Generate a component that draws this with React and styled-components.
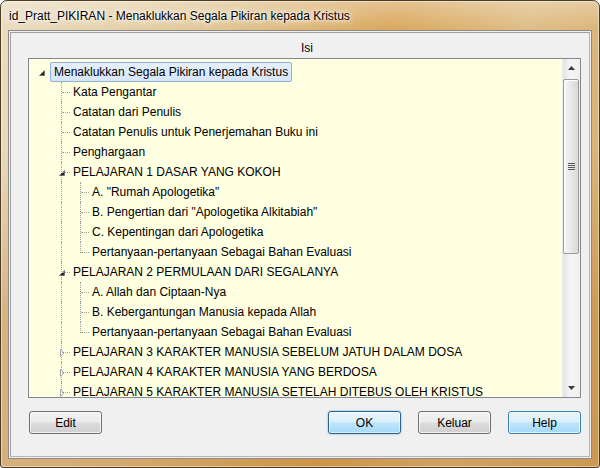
import React from 'react';
import styled, { createGlobalStyle, css } from 'styled-components';

const GlobalStyle = createGlobalStyle`
  html, body {
    margin: 0;
    padding: 0;
    background: #ffffff;
  }
  body {
    font-family: "Liberation Sans", Arial, sans-serif;
    font-size: 12px;
    color: #000;
  }
`;

const Window = styled.div`
  width: 600px;
  height: 468px;
  box-sizing: border-box;
  border: 1px solid #4a3d28;
  border-radius: 7px 7px 3px 3px;
  padding: 0 7px 8px 7px;
  display: flex;
  flex-direction: column;
  background:
    linear-gradient(180deg, rgba(255, 255, 255, 0.3), rgba(255, 255, 255, 0) 28px),
    linear-gradient(180deg, rgba(0, 0, 0, 0) 150px, rgba(185, 110, 30, 0.35) 320px),
    linear-gradient(100deg, #eadcc0 0%, #e2c898 30%, #d9a85e 58%, #dfbd85 78%, #d7ae6c 100%);
  box-shadow: inset 0 0 0 1px rgba(255, 255, 255, 0.45);
`;

const TitleBar = styled.div`
  height: 29px;
  flex: none;
  display: flex;
  align-items: center;
  padding-left: 1px;
  font-size: 12px;
  color: #000;
  text-shadow: 0 0 6px #fff, 0 0 10px rgba(255, 255, 255, 0.9), 0 0 3px #fff;
  white-space: nowrap;
`;

const Client = styled.div`
  flex: 1;
  border: 1px solid #8a8a8a;
  background: #f0f0f0;
  padding: 1px;
  display: flex;
`;

const Panel = styled.div`
  flex: 1;
  border: 1px solid #a0a0a0;
  border-right-color: #b4b4b4;
  border-bottom-color: #b4b4b4;
  padding: 6px 8px 0 17px;
  display: flex;
  flex-direction: column;
`;

const Header = styled.div`
  height: 19px;
  line-height: 19px;
  text-align: center;
  padding-left: 5px;
`;

const TreeBox = styled.div`
  height: 340px;
  box-sizing: border-box;
  border: 1px solid #828790;
  background: #ffffe1;
  display: flex;
`;

const TreeRows = styled.div`
  flex: 1;
  overflow: hidden;
  padding-top: 3px;
`;

const Row = styled.div`
  display: flex;
  height: 20px;
  padding-left: 3px;
  white-space: nowrap;
`;

const Cell = styled.div`
  position: relative;
  width: 19px;
  flex: none;
  ${p => p.$through && css`
    &::before {
      content: '';
      position: absolute;
      left: 10px;
      top: 0;
      bottom: 0;
      border-left: 1px dotted #a0a0a0;
    }
  `}
  ${p => p.$joint && css`
    &::before {
      content: '';
      position: absolute;
      left: 10px;
      top: 0;
      height: ${p.$last ? '11px' : '20px'};
      border-left: 1px dotted #a0a0a0;
    }
    &::after {
      content: '';
      position: absolute;
      left: 11px;
      top: 10px;
      width: 8px;
      border-top: 1px dotted #a0a0a0;
    }
  `}
`;

const Glyph = styled.svg`
  position: absolute;
  left: ${p => (p.$root ? 5 : 6)}px;
  top: 6px;
  width: 10px;
  height: 10px;
`;

const Label = styled.span`
  display: flex;
  align-items: center;
  box-sizing: border-box;
  height: 20px;
  margin-left: -1px;
  padding: 0 3px 0 3px;
  border: 1px solid transparent;
  border-radius: 2px;
  ${p => p.$selected && css`
    background: linear-gradient(180deg, #e6f0fc, #d6e6fa);
    border-color: #8fb1dc;
  `}
`;

const ScrollBar = styled.div`
  width: 17px;
  flex: none;
  display: flex;
  flex-direction: column;
  background: linear-gradient(90deg, #e3e3e3, #f5f5f5 40%, #f0f0f0);
  border-left: 1px solid #ececec;
`;

const Arrow = styled.div`
  height: 18px;
  flex: none;
  display: flex;
  align-items: center;
  justify-content: center;
`;

const Track = styled.div`
  flex: 1;
  display: flex;
  flex-direction: column;
`;

const Thumb = styled.div`
  height: 175px;
  margin: 2px 1px 0 0;
  box-sizing: border-box;
  border: 1px solid #9b9b9b;
  border-radius: 2px;
  background: linear-gradient(90deg, #f6f6f6, #e8e8e8 50%, #d8d8d8);
  box-shadow: inset 1px 1px 0 #ffffff;
  display: flex;
  align-items: center;
  justify-content: center;
`;

const Buttons = styled.div`
  display: flex;
  margin-top: 13px;
  padding-left: 1px;
`;

const Spacer = styled.div`
  flex: 1;
`;

const Button = styled.button`
  width: 73px;
  height: 23px;
  margin-left: ${p => (p.$first ? 0 : 17)}px;
  padding: 0;
  font-family: inherit;
  font-size: 12px;
  color: #000;
  border: 1px solid #707070;
  border-radius: 3px;
  background: linear-gradient(180deg, #f2f2f2 0%, #ebebeb 49%, #dddddd 51%, #cfcfcf 100%);
  box-shadow: inset 0 0 0 1px rgba(255, 255, 255, 0.7);
  ${p => p.$blue && css`
    border-color: #3c7fb1;
    background: linear-gradient(180deg, #eaf6fd 0%, #d9f0fc 49%, #bee6fd 51%, #a7d9f5 100%);
  `}
  ${p => p.$focus && css`
    border-color: #2c628b;
    box-shadow: inset 0 0 0 1px rgba(255, 255, 255, 0.6), 0 0 2px #48a8e0;
  `}
`;

// "more" marks a node whose list goes on past the visible part
const tree = {
  text: 'Menaklukkan Segala Pikiran kepada Kristus',
  open: true,
  selected: true,
  more: true,
  children: [
    { text: 'Kata Pengantar' },
    { text: 'Catatan dari Penulis' },
    { text: 'Catatan Penulis untuk Penerjemahan Buku ini' },
    { text: 'Penghargaan' },
    {
      text: 'PELAJARAN 1 DASAR YANG KOKOH',
      open: true,
      children: [
        { text: 'A. "Rumah Apologetika"' },
        { text: 'B. Pengertian dari "Apologetika Alkitabiah"' },
        { text: 'C. Kepentingan dari Apologetika' },
        { text: 'Pertanyaan-pertanyaan Sebagai Bahan Evaluasi' },
      ],
    },
    {
      text: 'PELAJARAN 2 PERMULAAN DARI SEGALANYA',
      open: true,
      children: [
        { text: 'A. Allah dan Ciptaan-Nya' },
        { text: 'B. Kebergantungan Manusia kepada Allah' },
        { text: 'Pertanyaan-pertanyaan Sebagai Bahan Evaluasi' },
      ],
    },
    { text: 'PELAJARAN 3 KARAKTER MANUSIA SEBELUM JATUH DALAM DOSA', children: [] },
    { text: 'PELAJARAN 4 KARAKTER MANUSIA YANG BERDOSA', children: [] },
    { text: 'PELAJARAN 5 KARAKTER MANUSIA SETELAH DITEBUS OLEH KRISTUS', children: [] },
  ],
};

const flatten = (node, guides, last, level, out) => {
  out.push({ node, guides, last, level });
  if (node.open && node.children) {
    node.children.forEach((child, i) => {
      const isLast = i === node.children.length - 1 && !node.more;
      const nextGuides = level === 0 ? [] : [...guides, !last];
      flatten(child, nextGuides, isLast, level + 1, out);
    });
  }
  return out;
};

const Expanded = ({ root }) => (
  <Glyph $root={root} viewBox="0 0 10 10">
    <polygon points="7.5,2.5 7.5,7.5 2.5,7.5" fill="#262626" stroke="#595959" strokeWidth="0.6" />
  </Glyph>
);

const Collapsed = () => (
  <Glyph viewBox="0 0 10 10">
    <polygon points="3.5,1.5 7,5 3.5,8.5" fill="#ffffff" stroke="#a6a6a6" strokeWidth="1" />
  </Glyph>
);

const TreeRow = ({ item }) => {
  const { node, guides, last, level } = item;
  const hasKids = !!node.children;
  return (
    <Row>
      {level > 0 && <Cell />}
      {guides.map((g, i) => <Cell key={i} $through={g} />)}
      <Cell $joint={level > 0} $last={last}>
        {hasKids && (node.open ? <Expanded root={level === 0} /> : <Collapsed />)}
      </Cell>
      <Label $selected={node.selected}>{node.text}</Label>
    </Row>
  );
};

const ArrowUp = () => (
  <svg width="7" height="4" viewBox="0 0 7 4">
    <polygon points="0,4 3.5,0 7,4" fill="#3a3a3a" />
  </svg>
);

const ArrowDown = () => (
  <svg width="7" height="4" viewBox="0 0 7 4">
    <polygon points="0,0 7,0 3.5,4" fill="#3a3a3a" />
  </svg>
);

const Grip = () => (
  <svg width="7" height="8" viewBox="0 0 7 8">
    {[0.5, 2.5, 4.5, 6.5].map(y => (
      <line key={y} x1="0" x2="7" y1={y} y2={y} stroke="#5a5a5a" strokeWidth="1" />
    ))}
  </svg>
);

export default function App() {
  const rows = flatten(tree, [], true, 0, []);
  return (
    <>
      <GlobalStyle />
      <Window>
        <TitleBar>id_Pratt_PIKIRAN - Menaklukkan Segala Pikiran kepada Kristus</TitleBar>
        <Client>
          <Panel>
            <Header>Isi</Header>
            <TreeBox>
              <TreeRows>
                {rows.map((r, i) => <TreeRow key={i} item={r} />)}
              </TreeRows>
              <ScrollBar>
                <Arrow><ArrowUp /></Arrow>
                <Track>
                  <Thumb><Grip /></Thumb>
                </Track>
                <Arrow><ArrowDown /></Arrow>
              </ScrollBar>
            </TreeBox>
            <Buttons>
              <Button $first>Edit</Button>
              <Spacer />
              <Button $first $blue $focus>OK</Button>
              <Button>Keluar</Button>
              <Button $blue>Help</Button>
            </Buttons>
          </Panel>
        </Client>
      </Window>
    </>
  );
}
